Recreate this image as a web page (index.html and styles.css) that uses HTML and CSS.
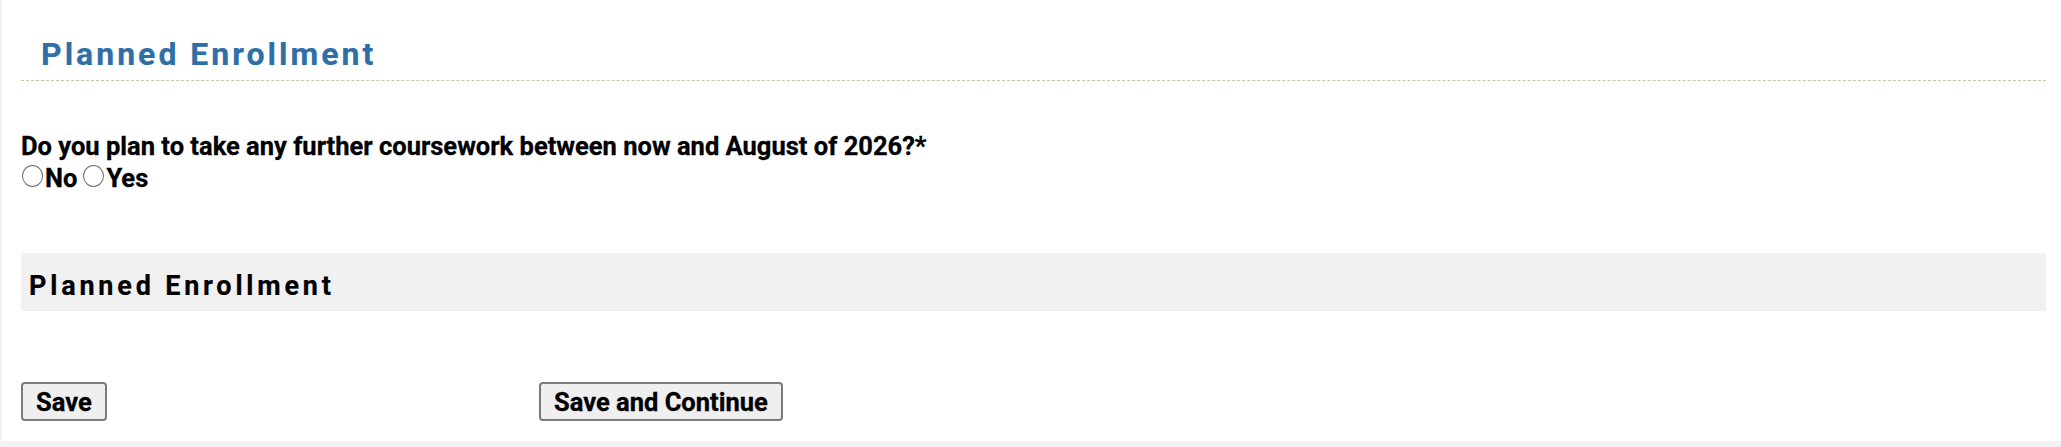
FILE: index.html
```html
<!DOCTYPE html>
<html lang="en">
<head>
<meta charset="utf-8">
<title>Planned Enrollment</title>
<link rel="stylesheet" href="styles.css">
</head>
<body>
<main class="panel">
  <h1 class="page-title">Planned Enrollment</h1>
  <form class="enroll-form">
    <fieldset class="question">
      <legend class="question-label">Do you plan to take any further coursework between now and August of 2026?*</legend>
      <div class="choices">
        <label class="choice"><input type="radio" name="further" value="no"><span>No</span></label>
        <label class="choice"><input type="radio" name="further" value="yes"><span>Yes</span></label>
      </div>
    </fieldset>
    <h2 class="section-title">Planned Enrollment</h2>
    <div class="actions">
      <button type="button" class="btn">Save</button>
      <button type="button" class="btn">Save and Continue</button>
    </div>
  </form>
</main>
</body>
</html>
```

FILE: styles.css
```css
html, body {
  margin: 0;
  padding: 0;
}

body {
  background: #f2f2f2;
  font-family: Roboto, "Liberation Sans", sans-serif;
  color: #000;
}

.panel {
  box-sizing: border-box;
  margin: 0 0 6px 2px;
  height: 441px;
  background: #fff;
  padding: 34px 15px 0 19px;
}

/* blue page heading with dashed rule */
.page-title {
  margin: 0;
  padding: 0 0 6px 20px;
  font-size: 32px;
  line-height: 40px;
  font-weight: 700;
  letter-spacing: 3px;
  color: #2f6fa7;
  -webkit-text-stroke: 0.2px #2f6fa7;
  border-bottom: 1px dashed #c6c4a2;
}

.enroll-form {
  margin: 0;
}

.question {
  border: 0;
  margin: 50px 0 0 0;
  padding: 0;
  min-width: 0;
}

.question-label {
  float: left;
  width: 100%;
  padding: 0;
  font-size: 25.5px;
  line-height: 30px;
  font-weight: 700;
  -webkit-text-stroke: 0.3px #000;
}

.choices {
  clear: both;
  display: flex;
  gap: 5px;
  font-size: 25.5px;
  line-height: 34px;
  font-weight: 700;
  -webkit-text-stroke: 0.3px #000;
}

.choice {
  display: inline-flex;
  align-items: baseline;
}

/* plain outlined radio */
.choice input {
  appearance: none;
  -webkit-appearance: none;
  box-sizing: border-box;
  margin: 0 2px -1px 1px;
  width: 21px;
  height: 22px;
  border: 1.5px solid #707070;
  border-radius: 50%;
  background: #fff;
}

/* grey sub-section band */
.section-title {
  margin: 58px 0 0 0;
  padding: 13px 0 5px 8px;
  background: #f1f1f1;
  font-size: 27px;
  line-height: 40px;
  font-weight: 700;
  letter-spacing: 3.8px;
  color: #000;
  -webkit-text-stroke: 0.2px #000;
}

.actions {
  display: grid;
  grid-template-columns: 518px auto;
  justify-items: start;
  margin-top: 71px;
}

.btn {
  box-sizing: border-box;
  font-family: Roboto, "Liberation Sans", sans-serif;
  font-size: 25.5px;
  font-weight: 700;
  color: #000;
  -webkit-text-stroke: 0.3px #000;
  background: #efefef;
  border: 2px solid #7a7a7a;
  border-radius: 4px;
  height: 39px;
  padding: 0 13px;
}
```
